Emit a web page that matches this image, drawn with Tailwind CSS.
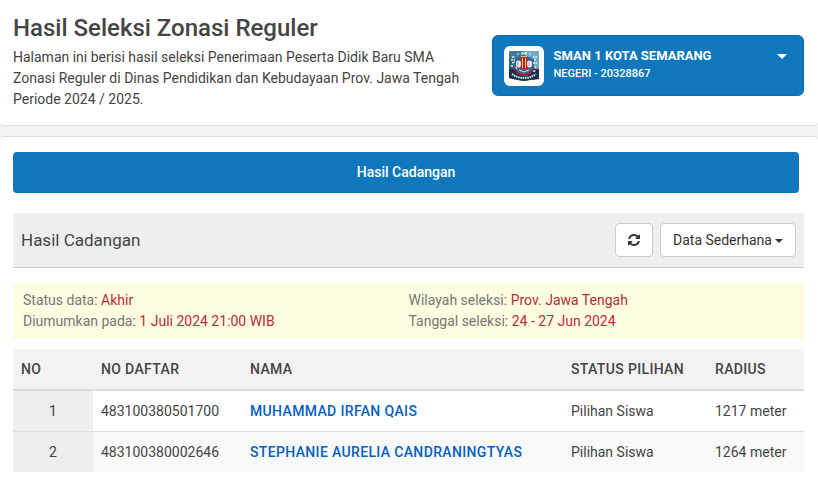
<!DOCTYPE html>
<html lang="id">
<head>
    <meta charset="UTF-8">
    <meta name="viewport" content="width=device-width, initial-scale=1.0">
    <title>Hasil Seleksi Zonasi Reguler</title>
    <script src="https://cdn.jsdelivr.net/npm/@tailwindcss/browser@4"></script>
</head>
<body class="bg-[#f3f3f3] font-[Roboto,sans-serif] text-sm leading-[21px] text-[#444]">

    <!-- Page Header -->
    <header class="flex items-start justify-between rounded-b border-b border-[#dcdcdc] bg-white pt-[13px] pr-[14px] pb-[15px] pl-[13px]">
        <div class="w-[57%]">
            <h1 class="mb-[3px] text-2xl leading-[31px] font-medium">Hasil Seleksi Zonasi Reguler</h1>
            <p>Halaman ini berisi hasil seleksi Penerimaan Peserta Didik Baru SMA Zonasi Reguler di Dinas Pendidikan dan Kebudayaan Prov. Jawa Tengah Periode 2024 / 2025.</p>
        </div>

        <!-- School Picker -->
        <button type="button" aria-haspopup="listbox" class="mt-[22px] flex w-[39.5%] items-start rounded-md border border-[#0d6cad] bg-[#0f78bd] px-[11px] pt-[10px] pb-[9px] text-left text-white">
            <span class="mr-[10px] flex size-10 shrink-0 items-center justify-center rounded-md bg-white">
                <svg class="size-[30px]" viewBox="0 0 30 30" aria-hidden="true">
                    <path d="M0 0h30v28l-9 1-6 1-6-1-9-2z" fill="#2c607f"/>
                    <path d="M15 0h15v18H15z" fill="#6fadc8"/>
                    <path d="M0 0h15v8H0z" fill="#3f7c99"/>
                    <path d="M0 18h30v10l-9 1-6 1-6-1-9-2z" fill="#16304c"/>
                    <path d="M5 8l10-4 10 4v8c0 5-5 8-10 10C10 24 5 21 5 16z" fill="#3b6887"/>
                    <path d="M3 6h3M2 9h4M3 12l3-1M2 15h2M8 17H6" stroke="#dcebf1" stroke-width="1.4" stroke-dasharray="2 .6"/>
                    <path d="M24 6h4M25 9l2-1M24 12h4M26 15v2M24 20h3" stroke="#e6f2f6" stroke-width="1.4" stroke-dasharray="2 .6"/>
                    <path d="M8 4l2-2M13 4V1l2 2 2-2v3M20 2l2 2" fill="none" stroke="#eff7fa" stroke-width="1"/>
                    <ellipse cx="9.500" cy="13" rx="2.600" ry="3.400" fill="#e0e8ea"/>
                    <ellipse cx="20.500" cy="13" rx="2.600" ry="3.400" fill="#e0e8ea"/>
                    <path d="M9 11v4M20 11v4" stroke="#a5bbc5" stroke-width="1"/>
                    <path d="M12 5h6v1h-6z" fill="#e8c84f"/>
                    <path d="M12 6h6v12h-6z" fill="#b3202b"/>
                    <path d="M13 7h1v10h-1zM16 7h1v10h-1z" fill="#efd052"/>
                    <path d="M5 16c2 6 6 8 10 8s8-2 10-8" fill="none" stroke="#a51e2b" stroke-width="1.700"/>
                    <path d="M10 19l5 2 5-2" fill="none" stroke="#d4dde1" stroke-width="1"/>
                    <path d="M3 23c4 3 8 4 12 4s8-1 12-4" fill="none" stroke="#e4edf0" stroke-width="2" stroke-dasharray="1.500 .800"/>
                </svg>
            </span>
            <span class="grow">
                <span class="block text-[13px] leading-5 font-bold">SMAN 1 KOTA SEMARANG</span>
                <span class="block text-[11px] leading-4 font-medium">NEGERI - 20328867</span>
            </span>
            <svg class="mt-2 mr-[5px] h-[5px] w-[10px]" viewBox="0 0 10 5" fill="currentColor" aria-hidden="true"><path d="M0 0h10L5 5z"/></svg>
        </button>
    </header>

    <!-- Results -->
    <main class="mt-[10px] min-h-[349px] rounded-t border-t border-[#dcdcdc] bg-white pt-[15px] pr-[14px] pl-[13px]">
        <div class="mb-5 pr-[5px]">
            <button type="button" class="h-[41px] w-full rounded bg-[#0f78bd] font-medium text-white">Hasil Cadangan</button>
        </div>

        <div class="flex items-center justify-between border-b border-[#ccc] bg-[#efefef] px-2 py-[10px]">
            <h2 class="text-[17px]">Hasil Cadangan</h2>
            <div class="flex gap-[7px]">
                <button type="button" aria-label="Muat ulang" class="flex h-[34px] w-[38px] items-center justify-center rounded border border-[#ccc] bg-white text-[#333]">
                    <svg class="size-3" viewBox="0 0 1536 1536" fill="currentColor" aria-hidden="true">
                        <path d="M1511 928q0 5-1 7-64 268-268 434.500T764 1536q-146 0-282.500-55T238 1324l-129 129q-19 19-45 19t-45-19-19-45V960q0-26 19-45t45-19h448q26 0 45 19t19 45-19 45l-137 137q71 66 161 102t187 36q134 0 250-65t186-179q11-17 53-117 8-23 30-23h192q13 0 22.500 9.500t9.500 22.500zm25-800v448q0 26-19 45t-45 19h-448q-26 0-45-19t-19-45 19-45l138-138Q969 256 768 256q-134 0-250 65T332 500q-11 17-53 117-8 23-30 23H50q-13 0-22.500-9.500T18 608v-7q65-268 270-434.500T768 0q146 0 284 55.500T1297 212l130-129q19-19 45-19t45 19 19 45z"/>
                    </svg>
                </button>
                <label class="relative text-[#333]">
                    <select aria-label="Tampilan data" class="h-[34px] w-[136px] appearance-none rounded border border-[#ccc] bg-white px-3">
                        <option>Data Sederhana</option>
                        <option>Data Lengkap</option>
                    </select>
                    <svg class="pointer-events-none absolute top-4 right-[13px] h-1 w-2" viewBox="0 0 8 4" fill="currentColor" aria-hidden="true"><path d="M0 0h8L4 4z"/></svg>
                </label>
            </div>
        </div>

        <!-- Status Info -->
        <div class="mt-[15px] mb-[10px] grid grid-cols-2 bg-[#fffde1] px-[10px] py-[7px] text-[#b92c3a]">
            <div>
                <p><span class="text-[#777]">Status data</span>: Akhir</p>
                <p><span class="text-[#777]">Diumumkan pada</span>: 1 Juli 2024 21:00 WIB</p>
            </div>
            <div>
                <p><span class="text-[#777]">Wilayah seleksi</span>: Prov. Jawa Tengah</p>
                <p><span class="text-[#777]">Tanggal seleksi</span>: 24 - 27 Jun 2024</p>
            </div>
        </div>

        <table class="w-full table-fixed border-separate border-spacing-0 text-left leading-5">
            <thead class="bg-[#f3f3f3]">
                <tr>
                    <th class="w-20 border-b-2 border-[#ddd] px-2 py-[10px] font-medium tracking-wide">NO</th>
                    <th class="w-[149px] border-b-2 border-[#ddd] px-2 py-[10px] font-medium tracking-wide">NO DAFTAR</th>
                    <th class="border-b-2 border-[#ddd] px-2 py-[10px] font-medium tracking-wide">NAMA</th>
                    <th class="w-36 border-b-2 border-[#ddd] px-2 py-[10px] font-medium tracking-wide">STATUS PILIHAN</th>
                    <th class="w-[97px] border-b-2 border-[#ddd] px-2 py-[10px] font-medium tracking-wide">RADIUS</th>
                </tr>
            </thead>
            <tbody>
                <tr>
                    <td class="border-b border-[#ddd] bg-[#eee] px-2 py-[10px] text-center">1</td>
                    <td class="border-b border-[#ddd] px-2 py-[10px]">483100380501700</td>
                    <td class="border-b border-[#ddd] px-2 py-[10px]"><a href="#" class="font-medium tracking-wide text-[#0660c2]">MUHAMMAD IRFAN QAIS</a></td>
                    <td class="border-b border-[#ddd] px-2 py-[10px]">Pilihan Siswa</td>
                    <td class="border-b border-[#ddd] px-2 py-[10px]">1217 meter</td>
                </tr>
                <tr class="bg-[#f9f9f9]">
                    <td class="bg-[#eee] px-2 py-[10px] text-center">2</td>
                    <td class="px-2 py-[10px]">483100380002646</td>
                    <td class="px-2 py-[10px]"><a href="#" class="font-medium tracking-wide text-[#0660c2]">STEPHANIE AURELIA CANDRANINGTYAS</a></td>
                    <td class="px-2 py-[10px]">Pilihan Siswa</td>
                    <td class="px-2 py-[10px]">1264 meter</td>
                </tr>
            </tbody>
        </table>
    </main>

</body>
</html>
